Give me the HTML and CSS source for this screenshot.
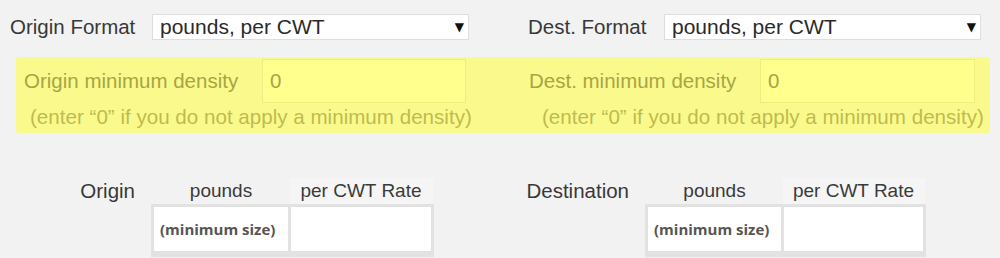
FILE: index.html
```html
<!DOCTYPE html>
<html>
<head>
<meta charset="utf-8">
<link rel="stylesheet" href="styles.css">
</head>
<body>
<div class="formats">
  <div class="fmt fmt-origin">
    <span class="fmt-label">Origin Format</span>
    <div class="select-box">
      <select class="select"><option>pounds, per CWT</option></select>
      <span class="arrow">▼</span>
    </div>
  </div>
  <div class="fmt fmt-dest">
    <span class="fmt-label">Dest. Format</span>
    <div class="select-box">
      <select class="select"><option>pounds, per CWT</option></select>
      <span class="arrow">▼</span>
    </div>
  </div>
</div>

<div class="band">
  <div class="dens dens-origin">
    <div class="dens-row">
      <span class="dens-label">Origin minimum density</span>
      <input class="dens-input" type="text" value="0">
    </div>
    <div class="hint">(enter “0” if you do not apply a minimum density)</div>
  </div>
  <div class="dens dens-dest">
    <div class="dens-row">
      <span class="dens-label">Dest. minimum density</span>
      <input class="dens-input" type="text" value="0">
    </div>
    <div class="hint">(enter “0” if you do not apply a minimum density)</div>
  </div>
</div>

<div class="rates">
  <div class="rate rate-origin">
    <span class="rate-label">Origin</span>
    <table class="rtable">
      <thead>
        <tr><th class="c1">pounds</th><th class="c2">per CWT Rate</th></tr>
      </thead>
      <tbody>
        <tr><td class="c1 minsize">(minimum size)</td><td class="c2"></td></tr>
        <tr class="next"><td class="c1"></td><td class="c2"></td></tr>
      </tbody>
    </table>
  </div>
  <div class="rate rate-dest">
    <span class="rate-label">Destination</span>
    <table class="rtable">
      <thead>
        <tr><th class="c1">pounds</th><th class="c2">per CWT Rate</th></tr>
      </thead>
      <tbody>
        <tr><td class="c1 minsize">(minimum size)</td><td class="c2"></td></tr>
        <tr class="next"><td class="c1"></td><td class="c2"></td></tr>
      </tbody>
    </table>
  </div>
</div>
</body>
</html>
```

FILE: styles.css
```css
* { box-sizing: border-box; }
html, body {
  margin: 0;
  padding: 0;
  background: #f2f2f2;
  font-family: "Liberation Sans", Arial, sans-serif;
  color: #383838;
  overflow: hidden;
  height: 258px;
}

/* Row 1 */
.formats {
  display: flex;
  padding-top: 14px;
  height: 40px;
}
.fmt {
  display: flex;
  align-items: center;
  height: 26px;
}
.fmt-origin { margin-left: 10px; width: 518px; }
.fmt-label {
  font-size: 20.5px;
  line-height: 26px;
  white-space: nowrap;
}
.fmt-origin .fmt-label { width: 142px; }
.fmt-dest .fmt-label { width: 136px; }
.select-box {
  display: flex;
  align-items: center;
  width: 317px;
  height: 26px;
  background: #fff;
  border: 1px solid #dedede;
}
.select {
  flex: 1;
  appearance: none;
  -webkit-appearance: none;
  border: 0;
  background: transparent;
  font-family: "Liberation Sans", Arial, sans-serif;
  font-size: 21px;
  color: #2a2a2a;
  padding: 0 0 0 7px;
  height: 24px;
  line-height: 24px;
  outline: none;
}
.arrow {
  font-family: "DejaVu Sans", sans-serif;
  font-size: 12px;
  line-height: 24px;
  color: #111;
  width: 20px;
  padding-right: 4px;
  text-align: right;
}

/* Yellow band */
.band {
  display: flex;
  margin: 17px 10px 0 16px;
  height: 76px;
  background: #fafa8c;
  border-radius: 3px;
  padding-top: 2px;
}
.dens { display: flex; flex-direction: column; }
.dens-origin { width: 497px; padding-left: 8px; }
.dens-dest { padding-left: 16px; }
.dens-row {
  display: flex;
  align-items: center;
  height: 44px;
}
.dens-label {
  font-size: 20.5px;
  color: #a8a444;
  white-space: nowrap;
}
.dens-origin .dens-label { width: 238px; }
.dens-dest .dens-label { width: 231px; }
.dens-input {
  height: 44px;
  border: 1px solid #eded82;
  background: #ffff8e;
  font-family: "Liberation Sans", Arial, sans-serif;
  font-size: 20.5px;
  color: #a8a444;
  padding: 0 0 0 7px;
  outline: none;
}
.dens-origin .dens-input { width: 204px; }
.dens-dest .dens-input { width: 215px; }
.hint {
  font-size: 20.6px;
  line-height: 28px;
  color: #c0ba50;
  white-space: nowrap;
}
.dens-origin .hint { padding-left: 6px; }
.dens-dest .hint { padding-left: 13px; }

/* Rates */
.rates {
  display: flex;
  margin-top: 45px;
}
.rate {
  display: flex;
  align-items: flex-start;
  gap: 16px;
}
.rate-origin { width: 500px; }
.rate-label {
  font-size: 20.5px;
  line-height: 26px;
  text-align: right;
  white-space: nowrap;
}
.rate-origin .rate-label { width: 135px; }
.rate-dest .rate-label { width: 129px; }
.rtable {
  border-collapse: collapse;
  border-spacing: 0;
}
.rtable th {
  font-weight: normal;
  font-size: 19px;
  line-height: 26px;
  height: 26px;
  padding: 0;
  text-align: center;
  color: #3a3a3a;
}
.rtable th.c2 { background: #f5f5f5; }
.rate-origin .c1 { width: 137px; }
.rate-origin .c2 { width: 143px; }
.rate-dest .c1 { width: 136px; }
.rate-dest .c2 { width: 142px; }
.rtable td {
  background: #fff;
  border: 3px solid #e2e2e2;
  height: 47px;
  padding: 0 0 0 6px;
}
.minsize {
  font-family: "Open Sans", "Liberation Sans", sans-serif;
  font-weight: 700;
  font-size: 15px;
  color: #555;
  white-space: nowrap;
}
.rtable tr.next td {
  background: #dedede;
  height: 3px;
  padding: 0;
}
```
